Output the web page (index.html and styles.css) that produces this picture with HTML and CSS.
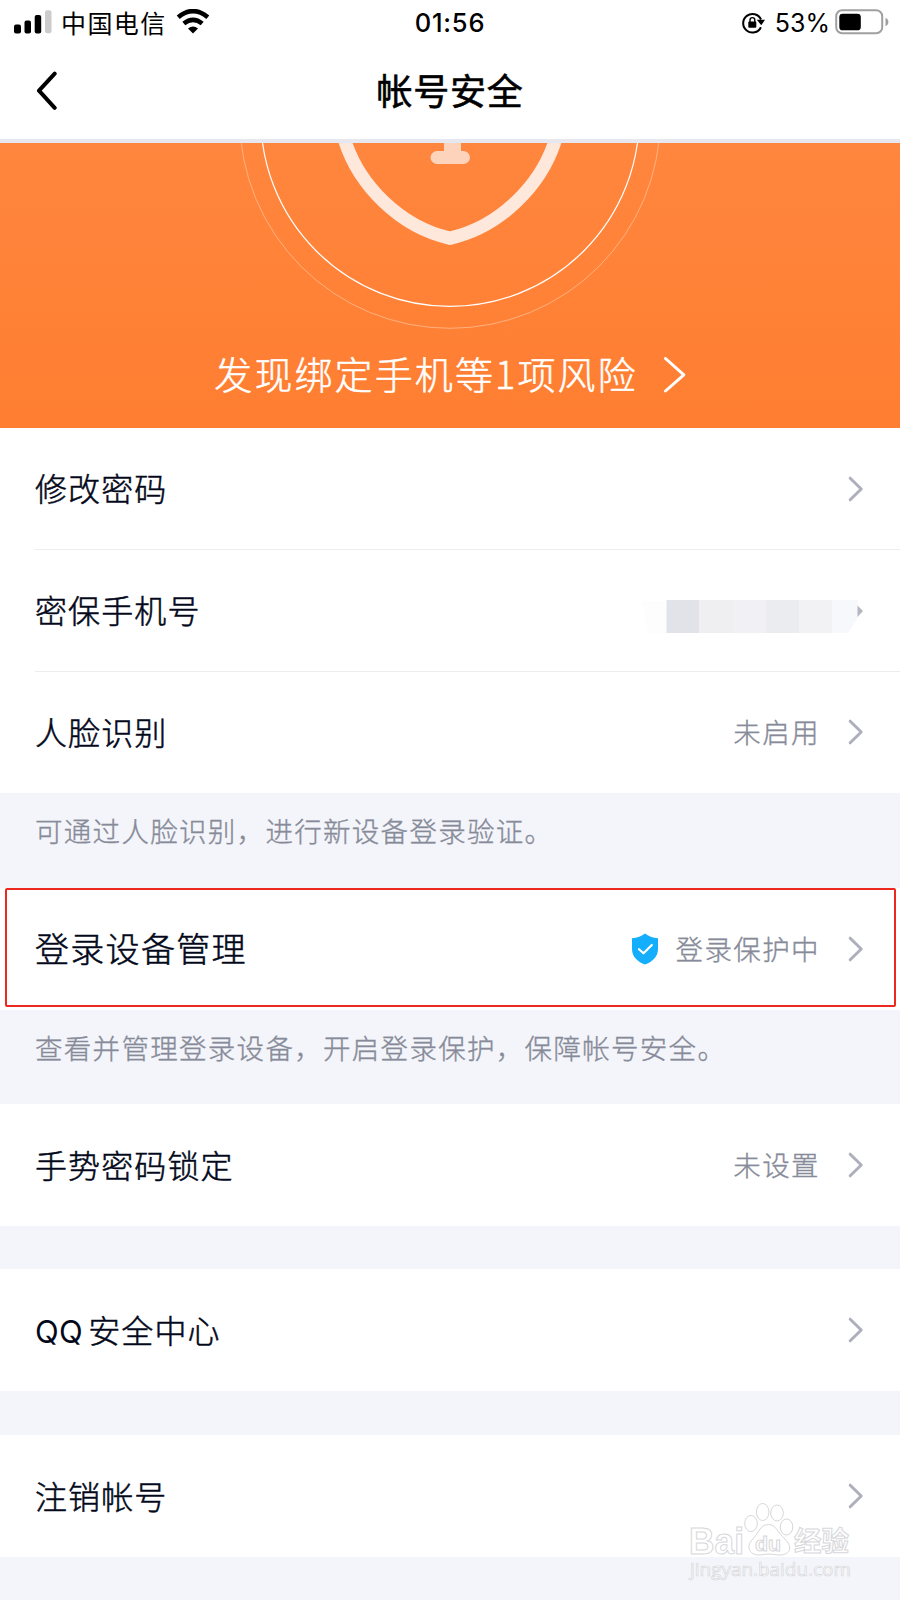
FILE: index.html
```html
<!DOCTYPE html>
<html lang="zh-CN">
<head>
<meta charset="utf-8">
<title>帐号安全</title>
<link rel="stylesheet" href="styles.css">
</head>
<body>
<svg width="0" height="0" class="defs">
  <symbol id="chev" viewBox="0 0 16 26"><path d="M2.2 2.2 13.2 13 2.2 23.8" fill="none" stroke="currentColor" stroke-width="3" stroke-linecap="round" stroke-linejoin="round"/></symbol>
</svg>
<div class="screen">
  <header class="statusbar">
    <div class="left">
      <svg class="signal" width="38" height="24" viewBox="0 0 38 24"><rect x="0" y="14.5" width="7" height="9" rx="2"/><rect x="10.5" y="10.5" width="6.5" height="13" rx="2"/><rect x="20.7" y="5" width="6.5" height="18.5" rx="2"/><rect x="31" y="0.3" width="6.5" height="23" rx="2" fill="#ccc"/></svg>
      <span class="carrier">中国电信</span>
      <svg class="wifi" width="34" height="25" viewBox="0 0 34 25"><g fill="none" stroke="#000" stroke-width="4.6"><path d="M2.2 8.2Q17-4 31.8 8.2"/><path d="M7.8 14.6Q17 7 26.2 14.6"/></g><path d="M12 19.6Q17 15.4 22 19.6L17 24.6Z"/></svg>
    </div>
    <span class="clock">01:56</span>
    <div class="right">
      <svg class="lock" width="24" height="22" viewBox="0 0 24 22"><path d="M19.9 15.2A9.3 9.3 0 1 1 20 7.5" fill="none" stroke="#000" stroke-width="2"/><path d="M15.8 7.8H24L20.3 13.2Z"/><rect x="7.3" y="9.4" width="8" height="6.4" rx="1"/><path d="M9 10V8a2.4 2.4 0 0 1 4.8 0v2" fill="none" stroke="#000" stroke-width="1.4"/></svg>
      <span class="percent">53%</span>
      <svg class="battery" width="54" height="26" viewBox="0 0 54 26"><rect x="1.2" y="1.2" width="46" height="23" rx="6" fill="none" stroke="#a0a0a0" stroke-width="2"/><rect x="4.3" y="4.8" width="21.5" height="16.5" rx="3.4"/><path d="M50.5 8.8Q53.4 10 53.4 13T50.5 17.2Z" fill="#a0a0a0"/></svg>
    </div>
  </header>
  <nav class="navbar">
    <svg class="back" width="22" height="40" viewBox="0 0 22 40"><path d="M18.7 2.6 3 19.7 18.7 36.8" fill="none" stroke="#000" stroke-width="4" stroke-linecap="round" stroke-linejoin="round"/></svg>
    <h1>帐号安全</h1>
  </nav>
  <section class="hero">
    <svg width="900" height="190" viewBox="0 143 900 190">
      <circle cx="450" cy="118" r="210.3" fill="none" stroke="#ffc096" stroke-opacity=".75"/>
      <circle cx="450" cy="117.2" r="189.2" fill="none" stroke="#fff" stroke-width="1.2"/>
      <path d="M344 138C358 185 400 227 450 238.2C500 227 542 185 556 138" fill="none" stroke="#fee8dc" stroke-width="13.2"/>
      <path d="M444 138h17v13h2.500a6.500 6.500 0 0 1 0 13h-26.500a6.500 6.500 0 0 1 0-13h7Z" fill="#fed3bc"/>
    </svg>
    <div class="risk"><span class="up">发现绑定手机等1项风险</span>
      <svg width="23" height="36" viewBox="0 0 23 36"><path d="M1.500 1.500 19.800 17.800 1.500 34" fill="none" stroke="#fff" stroke-width="3" stroke-linecap="round" stroke-linejoin="round"/></svg>
    </div>
  </section>
  <main>
    <div class="row top"><span class="label">修改密码</span><svg class="chev"><use href="#chev"/></svg></div>
    <div class="row line"><span class="label">密保手机号</span>
      <svg class="mosaic" width="222" height="56" viewBox="0 0 222 56"><path d="M0 23h26v32H6Z" fill="#fdfdfd"/><rect x="24.500" y="22" width="33" height="33" fill="#e2e3e8"/><rect x="57.500" y="22" width="33.500" height="33" fill="#efeff2"/><rect x="91" y="22" width="33" height="33" fill="#f1f1f5"/><rect x="124" y="22" width="33.500" height="33" fill="#ebecef"/><rect x="157.500" y="22" width="33" height="33" fill="#f2f2f5"/><path d="M190.500 22H216V40L206 55H190.500Z" fill="#f7f8fb"/><path d="M215.500 27.500 221 33l-5.500 6Z" fill="#b4b5c1"/></svg>
    </div>
    <div class="row line"><span class="label">人脸识别</span><span class="value">未启用</span><svg class="chev"><use href="#chev"/></svg></div>
    <p class="note first">可通过人脸识别，进行新设备登录验证。</p>
    <div class="row marked"><span class="label large">登录设备管理</span>
      <svg class="shield" width="28" height="32" viewBox="0 0 28 32"><path d="M14 .5Q19 4.500 27 5.300V16C27 24 21 29 14 31.500 7 29 1 24 1 16V5.300Q9 4.500 14 .5Z" fill="#14aefc"/><path d="M8 16.200 12.500 20.300 20.800 12" fill="none" stroke="#fff" stroke-width="2.200" stroke-linecap="round" stroke-linejoin="round"/></svg>
      <span class="value">登录保护中</span><svg class="chev"><use href="#chev"/></svg></div>
    <p class="note second">查看并管理登录设备，开启登录保护，保障帐号安全。</p>
    <div class="row"><span class="label">手势密码锁定</span><span class="value">未设置</span><svg class="chev"><use href="#chev"/></svg></div>
    <div class="row gap"><span class="label"><span class="latin">QQ</span>安全中心</span><svg class="chev"><use href="#chev"/></svg></div>
    <div class="row gap last"><span class="label">注销帐号</span><svg class="chev"><use href="#chev"/></svg></div>
  </main>
  <svg class="watermark" width="180" height="88" viewBox="0 0 180 88">
    <g fill="#fff" stroke="#d7d7da" stroke-width="1">
      <g class="mark">
        <text x="9" y="51.5" font-size="36" textLength="55" lengthAdjust="spacingAndGlyphs">Bai</text>
        <text class="cn" x="114" y="49" font-size="27" textLength="55" lengthAdjust="spacingAndGlyphs">经验</text>
      </g>
      <ellipse cx="71" cy="21.500" rx="6.300" ry="8"/><ellipse cx="82.700" cy="10" rx="6.300" ry="8.500"/><ellipse cx="97" cy="11" rx="6.300" ry="8"/><ellipse cx="106.500" cy="25" rx="6.300" ry="8"/>
      <path d="M88.500 22.500C96 22.500 97 30 105 37C114 46 109 53 100 53C95 53 92 52 89 52C85 52 83 53 79 53C69 53 66 44 72 38C79 31 80 22.500 88.500 22.500Z"/>
      <text class="du" x="75" y="48.500" font-size="20" textLength="26" lengthAdjust="spacingAndGlyphs">du</text>
      <text class="url" x="10" y="74" font-size="18.500" textLength="161" lengthAdjust="spacingAndGlyphs">jingyan.baidu.com</text>
    </g>
  </svg>
</div>
</body>
</html>
```
FILE: styles.css
```css
* { box-sizing: border-box; }
body { margin: 0; font-family: Inter, "Noto Sans CJK SC", sans-serif; color: #03081a; }
.defs { position: absolute; }
.screen { position: relative; width: 900px; height: 1600px; background: #f4f5fa; overflow: hidden; }

.statusbar { display: grid; grid-template-columns: 1fr auto 1fr; height: 46px; background: #fff; color: #000; align-items: center; line-height: 46px; }
.left, .right { display: flex; align-items: center; height: 46px; }
.left { padding-left: 14px; }
.right { justify-content: flex-end; padding-right: 11px; }
.carrier { font-family: "Noto Sans CJK SC", sans-serif; font-size: 25px; letter-spacing: 1.400px; margin: -3px 0 0 9px; }
.wifi { margin: -3px 0 0 9px; }
.signal { margin-top: -2px; }
.clock { font-size: 25.500px; font-weight: 500; letter-spacing: .8px; }
.percent { font-size: 25px; margin: 0 5px 0 10px; }
.battery { margin-top: -2px; }

.navbar { display: grid; grid-template-columns: 36px 1fr 36px; align-items: center; height: 97px; padding-bottom: 4px; background: #fff; border-bottom: 4px solid #e7e7ef; color: #000; }
.back { margin: 1px 0 0 36px; }
h1 { margin: -4px 0 0; text-align: center; font: 400 36px/60px "Noto Sans CJK SC", sans-serif; letter-spacing: .8px; -webkit-text-stroke: .6px #000; }

.hero { height: 285px; background: linear-gradient(#ff863e, #ff7e31); color: #fff; }
.hero > svg { display: block; }
.risk { display: flex; align-items: center; justify-content: center; height: 84px; padding-left: 1px; font: 300 38px/84px "Noto Sans CJK SC", sans-serif; letter-spacing: 2.100px; gap: 26px; -webkit-text-stroke: .5px #fff; }
.up { margin-top: -4px; }

main { font-family: "Noto Sans CJK SC", sans-serif; font-weight: 300; -webkit-text-stroke: .35px currentColor; }
.row { display: flex; align-items: center; height: 122px; padding: 0 36px 0 35px; background: #fff; }
.row.top { height: 121px; }
.row.line { background: linear-gradient(#ededf0, #ededf0) 35px 0 / 865px 1px no-repeat #fff; }
.row.gap { margin-top: 43px; }
.row.last { margin-top: 44px; }
.label { flex: 1; margin-top: -3px; font-size: 32px; letter-spacing: 1.100px; white-space: nowrap; -webkit-text-stroke: .5px #03081a; }
.label.large { font-size: 34px; letter-spacing: 1.300px; }
.latin { font-family: Inter, sans-serif; font-size: 31px; font-weight: 400; letter-spacing: .4px; margin-right: 5px; -webkit-text-stroke: 0; }
.value { margin-top: -3px; color: #878b99; font-size: 27.500px; letter-spacing: 1.400px; -webkit-text-stroke: .35px #878b99; }
.chev { width: 16px; height: 26px; margin-left: 28px; color: #aeafbd; }
.shield { margin: -1px 17px 0 0; }
.mosaic { margin-top: -8px; }
.note { margin: 0; padding-left: 35px; font-size: 27.500px; line-height: 74px; letter-spacing: 1.300px; color: #878b99; -webkit-text-stroke: .35px #878b99; }
.note.first { height: 95px; }
.note.second { height: 94px; }
.marked { position: relative; }
.marked::after { content: ""; box-sizing: border-box; position: absolute; left: 5px; right: 4px; top: 0; height: 119px; border: 2px solid #ed291f; border-radius: 2px; }

.watermark { position: absolute; left: 680px; top: 1502px; font-family: "Liberation Sans", sans-serif; }
.mark, .du { font-weight: 700; }
.cn { font-family: "Noto Sans CJK SC", sans-serif; }
.url { font-family: "Open Sans", sans-serif; stroke-width: .7px; }
```
